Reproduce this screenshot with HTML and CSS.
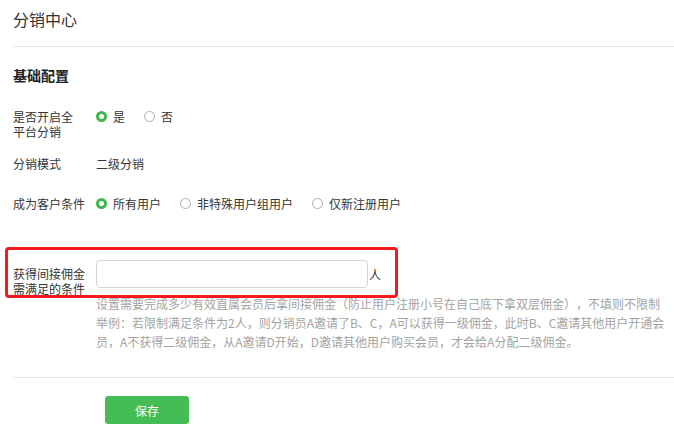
FILE: index.html
```html
<!DOCTYPE html>
<html lang="zh-CN">
<head>
<meta charset="utf-8">
<title>分销中心</title>
<link rel="stylesheet" href="styles.css">
</head>
<body>
<div class="page">
  <div class="header"><h1 class="title">分销中心</h1></div>
  <h2 class="section-title">基础配置</h2>

  <div class="row row-1">
    <div class="label">是否开启全<br>平台分销</div>
    <div class="field">
      <span class="radio-item"><span class="radio checked"></span>是</span>
      <span class="radio-item"><span class="radio"></span>否</span>
    </div>
  </div>

  <div class="row row-2">
    <div class="label">分销模式</div>
    <div class="field">二级分销</div>
  </div>

  <div class="row row-3">
    <div class="label">成为客户条件</div>
    <div class="field">
      <span class="radio-item"><span class="radio checked"></span>所有用户</span>
      <span class="radio-item"><span class="radio"></span>非特殊用户组用户</span>
      <span class="radio-item"><span class="radio"></span>仅新注册用户</span>
    </div>
  </div>

  <div class="row row-4">
    <span class="highlight"></span>
    <div class="label label-input">获得间接佣金<br>需满足的条件</div>
    <div class="field field-col">
      <div class="input-line">
        <input class="text-input" type="text">
        <span class="unit">人</span>
      </div>
      <p class="help">设置需要完成多少有效直属会员后拿间接佣金（防止用户注册小号在自己底下拿双层佣金），不填则不限制<br>举例：若限制满足条件为2人，则分销员A邀请了B、C，A可以获得一级佣金，此时B、C邀请其他用户开通会员，A不获得二级佣金，从A邀请D开始，D邀请其他用户购买会员，才会给A分配二级佣金。</p>
    </div>
  </div>

  <div class="divider"></div>
  <div class="actions"><button class="btn-save" type="button">保存</button></div>
</div>
</body>
</html>
```
FILE: styles.css
```css
* { box-sizing: border-box; }
html, body { margin: 0; padding: 0; background: #fff; }
body {
  font-family: "Noto Sans CJK SC", "Noto Sans", sans-serif;
  font-size: 12px;
  color: #353535;
  text-spacing-trim: space-all;
}
.page { padding-left: 13px; }
.header {
  padding-top: 8px;
  height: 47px;
  border-bottom: 1px solid #e7e7e7;
}
.title {
  margin: 0;
  font-size: 16px;
  line-height: 22px;
  font-weight: normal;
  color: #333;
}
.section-title {
  margin: 18px 0 0;
  font-size: 14px;
  line-height: 20px;
  font-weight: bold;
  color: #222;
}
.row {
  display: flex;
  align-items: flex-start;
  line-height: 15px;
}
.row-1 { margin-top: 24px; }
.row-2 { margin-top: 17px; }
.row-3 { margin-top: 25px; }
.row-4 { margin-top: 49px; position: relative; }
.label { width: 83px; flex: none; color: #353535; }
.label-input { padding-top: 6px; }
.field { display: flex; align-items: center; flex: 1; }
.field-col { flex-direction: column; align-items: flex-start; }
.radio-item {
  display: inline-flex;
  align-items: center;
  margin-right: 19px;
}
.radio {
  width: 11px;
  height: 11px;
  border-radius: 50%;
  border: 1px solid #adadad;
  background: #fff;
  margin-right: 6px;
  flex: none;
}
.radio.checked { border: 3px solid #44b549; }
.input-line { display: flex; align-items: center; }
.text-input {
  width: 272px;
  height: 28px;
  border: 1px solid #d5d5d5;
  border-radius: 4px;
  margin: 0;
  padding: 0 6px;
  font: inherit;
  outline: none;
}
.unit { margin-left: 1px; }
.help {
  margin: 6px 0 0;
  line-height: 19px;
  color: #a3a3a3;
  width: 574px;
}
.highlight {
  position: absolute;
  left: -8px;
  top: -13px;
  width: 393px;
  height: 51px;
  border: 3px solid #f5191b;
  border-radius: 4px;
  pointer-events: none;
}
.divider {
  margin-top: 26px;
  height: 1px;
  background: #e7e7e7;
}
.actions { padding: 18px 0 0 92px; }
.btn-save {
  width: 84px;
  height: 28px;
  border: 0;
  border-radius: 3px;
  background: #44bd55;
  color: #fff;
  font: inherit;
  font-size: 12px;
  padding: 0;
}
```
